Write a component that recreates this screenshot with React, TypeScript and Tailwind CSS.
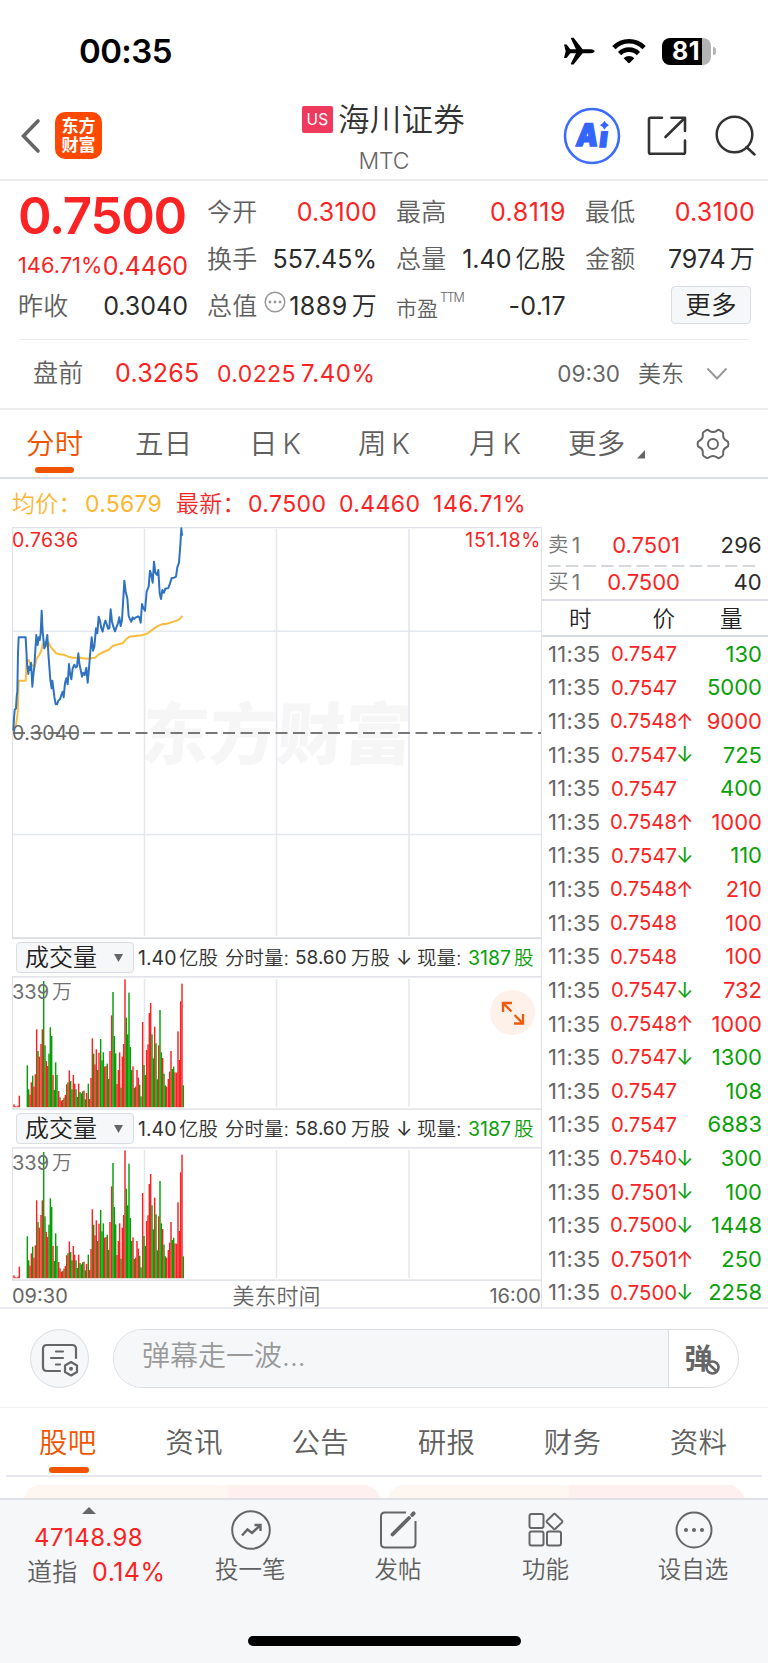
import React from "react";

const avgLine =
  "40,625 48,615 53,580 56,482 77,482 80,420 86,420 90,432 97,436 104,440 110,415 118,405 125,388 128,372 134,366 140,378 146,368 153,382 160,390 168,400 180,403 190,404 205,410 220,413 240,413 258,416 285,413 297,403 310,396 325,390 338,378 350,374 368,370 378,358 388,350 405,348 425,346 442,341 455,331 470,320 485,313 500,311 515,307 530,302 538,298 547,288";
const priceLine =
  "40,632 42,595 44,570 48,565 50,530 52,515 54,400 56,352 77,352 79,390 81,430 85,462 87,440 90,450 93,428 95,460 97,500 100,465 103,440 106,390 109,345 111,372 113,375 116,352 119,360 122,340 125,272 128,335 131,365 133,385 137,375 142,345 145,400 148,440 151,480 155,505 157,482 160,505 163,530 167,553 171,553 175,542 180,538 184,525 188,515 191,532 195,490 199,475 203,493 207,432 210,460 214,478 218,445 223,434 227,442 231,440 235,400 238,430 242,450 246,470 250,458 254,465 259,443 263,488 267,445 271,395 275,352 279,392 283,380 288,325 292,340 296,290 300,303 304,325 308,335 312,315 316,302 320,312 324,326 328,325 332,268 336,305 340,320 345,334 350,320 354,310 358,292 362,318 366,300 369,250 373,182 377,215 382,235 386,288 390,298 394,305 398,292 402,297 408,292 414,289 418,292 422,308 426,252 430,264 435,272 440,215 446,200 450,152 454,165 458,188 462,125 466,158 471,165 475,150 479,220 483,237 487,210 492,218 496,206 505,204 510,190 515,174 522,173 528,170 532,142 537,128 541,75 544,25 546,45 548,42";

const bars =
  "42:523r 46:529r 50:530r 54:527r 58:497r 82:406g 86:478g 90:494r 94:457r 98:437g 102:470r 106:433r 110:298r 114:363g 118:380r 123:342r 127:298r 131:153g 135:346g 139:393r 143:408r 147:371g 151:292g 155:318g 159:435r 163:480g 167:397g 171:435g 176:483r 180:502r 184:512r 188:510r 192:503g 196:495r 200:463r 204:457g 208:421r 212:453g 216:478g 220:435r 224:461r 228:478g 232:501g 236:461r 240:486g 244:490g 248:484g 252:482r 256:508g 260:489r 265:461g 269:507r 273:444r 277:325r 281:371g 285:403r 289:358r 293:420g 297:368r 302:327g 306:391g 310:367g 314:410r 318:408r 322:401g 326:447g 330:363r 335:256r 339:186g 343:318g 347:370g 351:462r 355:420r 359:367r 363:473g 367:380r 371:342r 375:148r 379:263g 383:313g 387:188g 391:351g 395:420g 399:409r 403:474g 407:470r 411:420r 415:443r 419:464g 423:499g 428:276r 432:405g 436:435g 440:360r 444:343r 448:249r 452:219r 456:313g 460:385g 464:290r 468:340g 472:448g 476:346r 480:240g 484:367g 488:384r 492:431g 496:466g 500:470r 505:447r 509:425r 513:363r 517:417g 521:410g 525:427r 530:428r 534:304r 538:390r 542:214r 546:161r 550:466g"
    .split(" ")
    .map((s) => {
      const [x, rest] = s.split(":");
      return { x: Number(x), top: parseInt(rest, 10), up: rest.endsWith("r") };
    });

const trades: [string, string, string, boolean][] = [
  ["0.7547", "", "130", false],
  ["0.7547", "", "5000", false],
  ["0.7548", "↑", "9000", true],
  ["0.7547", "↓", "725", false],
  ["0.7547", "", "400", false],
  ["0.7548", "↑", "1000", true],
  ["0.7547", "↓", "110", false],
  ["0.7548", "↑", "210", true],
  ["0.7548", "", "100", true],
  ["0.7548", "", "100", true],
  ["0.7547", "↓", "732", true],
  ["0.7548", "↑", "1000", true],
  ["0.7547", "↓", "1300", false],
  ["0.7547", "", "108", false],
  ["0.7547", "", "6883", false],
  ["0.7540", "↓", "300", false],
  ["0.7501", "↓", "100", false],
  ["0.7500", "↓", "1448", false],
  ["0.7501", "↑", "250", false],
  ["0.7500", "↓", "2258", false],
];

const RED = "text-[#fb2323]";
const GREEN = "text-[#09a009]";

function StatusBar() {
  return (
    <div className="flex h-[92px] items-start pr-[52px] pl-[79px]">
      <div className="mt-[31px] text-[33px] leading-[40px] font-semibold tracking-[-0.6px] text-black">00:35</div>
      <div className="mt-[37px] ml-auto flex items-center">
        <svg width="31" height="28" viewBox="0 0 31 28" className="mr-[17px]">
          <path
            d="M0 7.5H2.6L6.3 12.2H12L6.9 1.6Q6.6.8 7.5.8H9.6L18.6 12.2H26.5Q30.6 12.6 30.6 14.2Q30.6 15.9 26.5 16.3H18.6L9.6 27.4H7.5Q6.6 27.4 6.9 26.6L12 16.3H6.3L2.6 21H0L1.7 14.2Z"
            fill="#000"
          />
        </svg>
        <svg width="34" height="26" viewBox="0 0 34 26" className="mr-[16px]">
          <g fill="none" stroke="#000" strokeWidth="4.6">
            <path d="M1.9 9.6A21 21 0 0 1 32.1 9.6" />
            <path d="M7.6 15.6A13.2 13.2 0 0 1 26.4 15.6" />
          </g>
          <path d="M11.6 20.2A8 8 0 0 1 22.4 20.2L17.9 24.8Q17 25.6 16.1 24.8Z" fill="#000" />
        </svg>
        <div className="flex h-[27px] w-[49px] items-center rounded-[8px] bg-[linear-gradient(90deg,#000_81%,#b3b3b3_81%)]">
          <span className="ml-[10px] text-[25px] leading-[31px] font-bold tracking-[0.4px] text-white">81</span>
        </div>
        <div className="ml-[2px] h-[8px] w-[3px] rounded-r-full bg-[#b3b3b3]" />
      </div>
    </div>
  );
}

function Header() {
  return (
    <div className="flex h-[89px] items-start border-b-2 border-[#ebebeb] pl-[20px]">
      <svg width="22" height="38" viewBox="0 0 22 38" className="mt-[25px]">
        <path d="M18 4L3.5 19L18 34" fill="none" stroke="#666" strokeWidth="3.6" strokeLinecap="round" />
      </svg>
      <div className="mt-[20px] ml-[13px] flex h-[47px] w-[47px] flex-col items-center justify-center rounded-[10px] bg-[#ff4800] text-[17px] leading-[19px] font-bold tracking-[0px] text-white">
        <span>东方</span>
        <span>财富</span>
      </div>
      <div className="ml-[200px] w-[166px]">
        <div className="mt-[6px] flex h-[42px] items-center">
          <span className="flex h-[27px] w-[31px] items-center justify-center rounded-[2px] bg-[#f03a5d] pt-px text-[15.5px] text-white">
            US
          </span>
          <span className="mt-[2px] ml-[5px] text-[31.5px] leading-[42px] font-[350] whitespace-nowrap text-[#333]">海川证券</span>
        </div>
        <div className="mt-[7px] w-[164px] text-center text-[23px] leading-[28px] font-[350] tracking-[-0.2px] text-[#666]">
          MTC
        </div>
      </div>
      <svg width="58" height="58" viewBox="0 0 58 58" className="mt-[15px] ml-[95px]">
        <circle cx="29" cy="29" r="27" fill="none" stroke="#3b6cff" strokeWidth="2.6" />
        <g fill="#3466ff" stroke="#3466ff" strokeWidth="1.6" fontFamily="Inter, sans-serif" fontWeight="900">
          <text transform="translate(12.2 39) skewX(-7)" fontSize="31" textLength="22" lengthAdjust="spacingAndGlyphs">
            A
          </text>
          <text transform="translate(35.6 39.8) skewX(-7)" fontSize="28">
            ı
          </text>
        </g>
        <path d="M41.5 13.8Q42.8 16.9 46 18.2Q42.8 19.5 41.5 22.7Q40.1 19.5 37 18.2Q40.1 16.9 41.5 13.8Z" fill="#3466ff" />
      </svg>
      <svg width="42" height="42" viewBox="0 0 42 42" className="mt-[22px] ml-[25px]">
        <g fill="none" stroke="#333" strokeWidth="2.6" strokeLinecap="round" strokeLinejoin="round">
          <path d="M16 3.8H4.5Q3 3.8 3 5.3V38.2Q3 39.7 4.5 39.7H37.5Q39 39.7 39 38.2V26.5M25.5 3.8H39V17M39 3.8L19.5 23" />
        </g>
      </svg>
      <svg width="42" height="42" viewBox="0 0 42 42" className="mt-[22px] ml-[27px]">
        <g fill="none" stroke="#333" strokeWidth="2.5" strokeLinecap="round">
          <circle cx="19.5" cy="20.5" r="17.8" />
          <path d="M31.5 33L39.5 40.5" />
        </g>
      </svg>
    </div>
  );
}

function Pair({ label, value, red }: { label: string; value: string; red?: boolean }) {
  return (
    <div className="flex h-[47px] items-center justify-between text-[25px] whitespace-nowrap">
      <span className="-ml-px font-[350] text-[#606060]">{label}</span>
      <span className={red ? "text-[#fb2323]" : "tracking-[0px] text-[#2b2b2b]"}>{value}</span>
    </div>
  );
}

function Quote() {
  return (
    <div className="h-[158px] pt-[8px] pr-[13px] pl-[18px]">
      <div className="grid grid-cols-[170px_169px_169px_169px] gap-x-[20px]">
        <div>
          <div className={`h-[53px] text-[51px] leading-[53px] font-semibold tracking-[-1.3px] ${RED}`}>0.7500</div>
          <div className={`flex h-[41px] items-center justify-between pt-[5px] ${RED}`}>
            <span className="text-[21.8px] tracking-[0px]">146.71%</span>
            <span className="pt-[4px] text-[25px] tracking-[-0.1px]">0.4460</span>
          </div>
          <div className="flex h-[47px] items-center justify-between text-[25px] whitespace-nowrap">
            <span className="font-[350] text-[#606060]">昨收</span>
            <span className="tracking-[0px] text-[#2b2b2b]">0.3040</span>
          </div>
        </div>
        <div>
          <Pair label="今开" value="0.3100" red />
          <Pair label="换手" value="557.45%" />
          <div className="flex h-[47px] items-center text-[25px] whitespace-nowrap">
            <span className="-ml-px font-[350] text-[#606060]">总值</span>
            <svg width="22" height="22" viewBox="0 0 22 22" className="mb-[10px] ml-[6px]">
              <circle cx="11" cy="11" r="9.8" fill="none" stroke="#999" strokeWidth="1.5" />
              <g fill="#999">
                <circle cx="6" cy="11" r="1.4" />
                <circle cx="11" cy="11" r="1.4" />
                <circle cx="16" cy="11" r="1.4" />
              </g>
            </svg>
            <span className="ml-auto flex gap-[4px] text-[#2b2b2b]">
              <span className="tracking-[0.5px]">1889</span>
              <span className="font-[350]">万</span>
            </span>
          </div>
        </div>
        <div>
          <div className="flex h-[47px] items-center justify-between text-[25px] whitespace-nowrap">
            <span className="-ml-px font-[350] text-[#606060]">最高</span>
            <span className={`tracking-[0.5px] ${RED}`}>0.8119</span>
          </div>
          <div className="flex h-[47px] items-center justify-between text-[25px] whitespace-nowrap">
            <span className="-ml-px font-[350] text-[#606060]">总量</span>
            <span className="flex gap-[4px] text-[#2b2b2b]">
              <span className="tracking-[0px]">1.40</span>
              <span className="font-[350]">亿股</span>
            </span>
          </div>
          <div className="flex h-[47px] items-center text-[25px]">
            <span className="mt-[5px] -ml-px text-[21px] font-[350] tracking-[0px] text-[#606060]">市盈</span>
            <span className="mb-[17px] ml-[2px] text-[12.5px] font-light tracking-[-1.2px] text-[#666]">TTM</span>
            <span className="ml-auto tracking-[0.3px] text-[#2b2b2b]">-0.17</span>
          </div>
        </div>
        <div>
          <Pair label="最低" value="0.3100" red />
          <div className="flex h-[47px] items-center justify-between text-[25px] whitespace-nowrap">
            <span className="-ml-px font-[350] text-[#606060]">金额</span>
            <span className="flex gap-[4px] text-[#2b2b2b]">
              <span className="tracking-[0px]">7974</span>
              <span className="font-[350]">万</span>
            </span>
          </div>
          <div className="mt-[3px] ml-[85px] flex h-[38px] w-[80px] items-center justify-center rounded-[4px] border border-[#d9dce2] bg-[#f6f7f9] text-[25.5px] font-[350] text-[#222]">
            更多
          </div>
        </div>
      </div>
    </div>
  );
}

function PreMarket() {
  return (
    <div className="flex h-[70px] items-center border-b-2 border-[#ededed] whitespace-nowrap">
      <span className="ml-[33px] w-[82px] text-[25px] font-[350] text-[#606060]">盘前</span>
      <span className={`w-[102px] text-[25px] ${RED}`}>0.3265</span>
      <span className={`w-[84px] text-[23px] tracking-[0.4px] ${RED}`}>0.0225</span>
      <span className={`text-[24px] tracking-[0.6px] ${RED}`}>7.40%</span>
      <span className="ml-auto text-[22.5px] tracking-[0px] text-[#666]">09:30</span>
      <span className="ml-[18px] text-[23px] font-[350] tracking-[0px] text-[#606060]">美东</span>
      <svg width="22" height="14" viewBox="0 0 22 14" className="mr-[40px] ml-[22px]">
        <path d="M1.5 1.5L11 11.5L20.5 1.5" fill="none" stroke="#999" strokeWidth="2" />
      </svg>
    </div>
  );
}

function PeriodTabs() {
  return (
    <div className="flex h-[69px] border-b-2 border-[#dadde3] pl-[26px] text-[28.5px] leading-[68px] font-[350] text-[#606060] [word-spacing:-3.5px]">
      <div className="flex w-[109px] flex-col items-start text-[#f05400]">
        <span className="h-[57px]">分时</span>
        <span className="ml-[9px] h-[6px] w-[39px] rounded-full bg-[#f05400]" />
      </div>
      <span className="w-[114px]">五日</span>
      <span className="w-[109px]">日 K</span>
      <span className="w-[111px]">周 K</span>
      <span className="w-[99px]">月 K</span>
      <span className="w-[58px]">更多</span>
      <svg width="9" height="9" viewBox="0 0 9 9" className="mt-[40px] ml-[11px]">
        <path d="M8 0V8.5H0Z" fill="#666" />
      </svg>
      <svg width="34" height="32" viewBox="0 0 34 32" className="mt-[18px] ml-[50px]">
        <g fill="none" stroke="#666" strokeWidth="2" strokeLinejoin="round">
          <path d="M10.5 2.2Q11.8 1.4 13 2.6Q17 5.4 21 2.6Q22.2 1.4 23.5 2.2L26.4 4Q27.6 4.8 27.2 6.4Q26.6 11 31 13Q32.4 13.5 32.4 16Q32.4 18.5 31 19Q26.6 21 27.2 25.6Q27.6 27.2 26.4 28L23.5 29.8Q22.2 30.6 21 29.4Q17 26.6 13 29.4Q11.8 30.6 10.5 29.8L7.6 28Q6.4 27.2 6.8 25.6Q7.4 21 3 19Q1.6 18.5 1.6 16Q1.6 13.5 3 13Q7.4 11 6.8 6.4Q6.4 4.8 7.6 4Z" />
          <circle cx="17" cy="16" r="5" />
        </g>
      </svg>
    </div>
  );
}

function VolumeRow() {
  return (
    <div className="flex items-center pl-[4px] text-[19.5px] tracking-[0px] whitespace-nowrap text-[#333]">
      <div className="flex h-[31px] w-[118px] items-center rounded-[4px] border border-[#d9dce2] bg-[#f6f7f9] pl-[8px]">
        <span className="text-[24px] leading-[29px] font-[350] text-[#222]">成交量</span>
        <svg width="9" height="8" viewBox="0 0 9 8" className="ml-[17px]">
          <path d="M0 0H9L4.5 8Z" fill="#666" />
        </svg>
      </div>
      <div className="flex items-center pt-[2px]">
        <span className="ml-[4px] w-[38px]">1.40</span>
        <span className="ml-[3px] w-[46px] font-[350]">亿股</span>
        <span className="w-[70px] font-[350]">分时量:</span>
        <span className="w-[56px] text-[19px]">58.60</span>
        <span className="w-[45px] font-[350]">万股</span>
        <span className="w-[21px]">↓</span>
        <span className="w-[51px] font-[350]">现量:</span>
        <span className={GREEN}>3187</span>
        <span className={`ml-[3px] font-[350] ${GREEN}`}>股</span>
      </div>
    </div>
  );
}

function VolumeChart({ expand }: { expand?: boolean }) {
  return (
    <div className="relative h-[134px] w-[529px]">
      <svg width="529" height="134" viewBox="12 976 529 134" className="block">
        <path d="M12.5 977V1109" stroke="#dfe2e8" />
        <path d="M12 976.8H541M12 1109.2H541" stroke="#d9dce2" strokeWidth="1.2" />
        <path d="M144.5 979V1107M276.5 979V1107M409 979V1107" stroke="#e3e7ee" strokeWidth="1.5" />
        {bars.map((b) => (
          <rect
            key={b.x}
            x={b.x / 3 - 0.72}
            y={930 + b.top / 3}
            width="1.44"
            height={(531 - b.top) / 3 + 0.2}
            fill={b.up ? "#f92222" : "#06a006"}
          />
        ))}
      </svg>
      <div className="absolute top-[4px] left-0 flex gap-[3px] text-[20px] leading-[24px] tracking-[0px] text-[#707070]">
        <span>339</span>
        <span className="font-[350]">万</span>
      </div>
      {expand && (
        <div className="absolute top-[14px] left-[478px] flex h-[45px] w-[45px] items-center justify-center rounded-full bg-[#fdf1ea]">
          <svg width="24" height="24" viewBox="0 0 24 24">
            <path
              d="M2 11V2H11M2 2L10.5 10.5M22 13V22.5H13M22 22.5L13.5 14"
              fill="none"
              stroke="#f05a0a"
              strokeWidth="2.3"
            />
          </svg>
        </div>
      )}
    </div>
  );
}

function Charts() {
  return (
    <div className="w-[529px] shrink-0">
      <div className="relative h-[412px]">
        <svg width="529" height="412" viewBox="12 527 529 412" className="block">
          <text
            transform="translate(140 759) skewX(-4)"
            fontSize="67.5"
            fontWeight="900"
            fill="#f6f6f6"
            fontFamily="'Noto Sans CJK SC', sans-serif"
          >
            东方财富
          </text>
          <path d="M12.5 527V938M12 527.6H541" stroke="#dfe2e8" strokeWidth="1.2" />
          <path d="M144.5 529V936M276.5 529V936M409 529V936M13 631.2H541M13 834.5H541" stroke="#e3e7ee" strokeWidth="1.6" />
          <path d="M12 938.2H541" stroke="#dadde3" strokeWidth="2" />
          <path d="M13 733H541" stroke="#777" strokeWidth="2.2" strokeDasharray="12 5.5" />
          <g transform="translate(0 520) scale(.33333)" fill="none" strokeLinejoin="round">
            <polyline points={avgLine} stroke="#fdbb3c" strokeWidth="6" />
            <polyline points={priceLine} stroke="#2f73c0" strokeWidth="6" />
          </g>
        </svg>
        <span className={`absolute top-[1px] left-0 text-[19.5px] leading-[24px] tracking-[0.4px] ${RED}`}>0.7636</span>
        <span className={`absolute top-[1px] right-0 text-[19.5px] leading-[24px] tracking-[0.7px] ${RED}`}>151.18%</span>
        <span className="absolute top-[194px] left-0 text-[19.5px] leading-[24px] tracking-[0.4px] text-[#666]">0.3040</span>
      </div>
      <div className="flex h-[37px] items-center">
        <VolumeRow />
      </div>
      <VolumeChart expand />
      <div className="flex h-[37px] items-center">
        <VolumeRow />
      </div>
      <VolumeChart />
      <div className="grid h-[25px] grid-cols-3 items-center text-[20px] tracking-[0px] text-[#666]">
        <span>09:30</span>
        <span className="text-center text-[22px] leading-[25px] font-[350]">美东时间</span>
        <span className="text-right">16:00</span>
      </div>
    </div>
  );
}

function OrderRow({ side, price, qty }: { side: string; price: string; qty: string }) {
  return (
    <div className="flex h-[37px] items-center">
      <span className="flex w-[50px] items-center gap-[3px] text-[#777]">
        <span className="text-[20.5px] font-[350]">{side}</span>
        <span className="text-[21px]">1</span>
      </span>
      <span className={`w-[82px] text-right text-[22px] tracking-[0px] ${RED}`}>{price}</span>
      <span className="ml-auto text-[22px] text-[#2b2b2b]">{qty}</span>
    </div>
  );
}

function Tape() {
  return (
    <div className="flex-1 border-l border-[#dfe2e8]">
      <div className="h-[74px] border-b-2 border-[#dadde3] pr-[6px] pl-[6px] whitespace-nowrap">
        <OrderRow side="卖" price="0.7501" qty="296" />
        <svg width="208" height="2" viewBox="0 0 208 2" className="mt-[1px] block">
          <path d="M0 1H208" stroke="#d5d8df" strokeWidth="2" strokeDasharray="12.5 5.2" />
        </svg>
        <div className="-mt-[3px]">
          <OrderRow side="买" price="0.7500" qty="40" />
        </div>
      </div>
      <div className="flex h-[36px] items-center border-b-2 border-[#dadde3] pt-[2px] text-[22.5px] font-[350] tracking-[0px] text-[#222]">
        <span className="ml-[27px]">时</span>
        <span className="ml-[61px]">价</span>
        <span className="ml-[45px]">量</span>
      </div>
      <div className="pr-[6px] pl-[6px]">
        {trades.map(([price, arrow, qty, up], i) => (
          <div key={i} className="flex h-[33.62px] items-center pt-px text-[22px] whitespace-nowrap">
            <span className="w-[56px] text-[#666]">11:35</span>
            <span
              className={
                price === "0.7501"
                  ? "w-[73px] text-right text-[21.5px] tracking-[0px] text-[#fb2323]"
                  : "w-[73px] text-right text-[20.3px] tracking-[0px] text-[#fb2323]"
              }
            >
              {price}
            </span>
            <span
              className={
                arrow === "↑" ? "-ml-px w-[15px] text-[21px] text-[#fb2323]" : "-ml-px w-[15px] text-[21px] text-[#09a009]"
              }
            >
              {arrow}
            </span>
            <span className={up ? "ml-auto tracking-[0px] text-[#fb2323]" : "ml-auto tracking-[0px] text-[#09a009]"}>{qty}</span>
          </div>
        ))}
      </div>
    </div>
  );
}

function Danmu() {
  return (
    <div className="flex h-[99px] items-start border-b border-[#efefef] pt-[20px] pl-[30px]">
      <div className="flex h-[59px] w-[59px] items-center justify-center rounded-full border border-[#d9dce2] bg-[#f6f7f9]">
        <svg width="38" height="34" viewBox="0 0 38 34" className="mt-[2px] ml-[1px]">
          <g fill="none" stroke="#666" strokeWidth="2.2" strokeLinecap="round">
            <path d="M19 28H6Q2 28 2 24V6Q2 2 6 2H31Q35 2 35 6V15" />
            <path d="M15 8.5H22M10 15H22M15 21.5H19" />
            <path d="M30 19L36 22.5V29L30 32.5L24 29V22.5Z" strokeLinejoin="round" />
          </g>
          <circle cx="30" cy="25.8" r="2" fill="#666" />
        </svg>
      </div>
      <div className="ml-[23.5px] flex h-[59px] w-[626px] overflow-hidden rounded-full border border-[#d9dce2]">
        <div className="w-[555px] border-r border-[#d9dce2] bg-[#f6f7f9] pl-[28.5px] text-[28px] leading-[53px] font-[350] tracking-[0px] text-[#999]">
          弹幕走一波...
        </div>
        <div className="flex flex-1 items-center pl-[16px]">
          <span className="text-[28px] font-bold text-[#666]">弹</span>
          <svg width="15" height="15" viewBox="0 0 15 15" className="mt-[18px] -ml-[8px] shrink-0">
            <circle cx="7.5" cy="7.5" r="6" fill="#fff" stroke="#666" strokeWidth="2.6" />
            <path d="M3.8 4L11.2 11" stroke="#666" strokeWidth="2.6" />
          </svg>
        </div>
      </div>
    </div>
  );
}

function SectionTabs() {
  return (
    <div className="mx-[6px] h-[69px] border-b-2 border-[#e6e8ed]">
      <div className="flex h-full pl-[33px] text-[28.5px] leading-[70px] font-[350] text-[#606060]">
        <div className="flex w-[126.3px] flex-col items-start text-[#f05400]">
          <span className="h-[59px]">股吧</span>
          <span className="ml-[10px] h-[6px] w-[40px] rounded-full bg-[#f05400]" />
        </div>
        <span className="w-[126.2px]">资讯</span>
        <span className="w-[126.2px]">公告</span>
        <span className="w-[126px]">研报</span>
        <span className="w-[126px]">财务</span>
        <span>资料</span>
      </div>
    </div>
  );
}

function Action({ label, children }: { label: string; children: React.ReactNode }) {
  return (
    <div className="flex w-[147.6px] flex-col items-center">
      <svg width="42" height="42" viewBox="0 0 42 42" className="mt-[9px]" fill="none" stroke="#666" strokeWidth="2">
        {children}
      </svg>
      <span className="mt-[3px] -ml-px text-[23.5px] leading-[32px] font-[350] tracking-[0px] text-[#606060]">{label}</span>
    </div>
  );
}

function BottomBar() {
  return (
    <div className="flex h-[165px] flex-col border-t-2 border-[#dfe1e6] bg-[#f6f7f9]">
      <div className="flex h-[136px]">
        <div className="w-[177px]">
          <svg width="14" height="7" viewBox="0 0 14 7" className="mt-[7px] ml-[82px] block">
            <path d="M7 0L14 7H0Z" fill="#666" />
          </svg>
          <div className={`mt-[8px] ml-[34px] text-[24px] leading-[32px] tracking-[0.5px] ${RED}`}>47148.98</div>
          <div className="mt-[1px] ml-[27px] flex items-center text-[25px] leading-[34px]">
            <span className="w-[65px] font-[350] text-[#606060]">道指</span>
            <span className={`tracking-[0.5px] ${RED}`}>0.14%</span>
          </div>
        </div>
        <Action label="投一笔">
          <circle cx="21" cy="21" r="18.8" />
          <path d="M12 26.5L17.5 20.5L22 24L30 16.5M24.5 16H30.5V22" strokeWidth="2.4" />
        </Action>
        <Action label="发帖">
          <path d="M29 3.5H8Q4 3.5 4 7.5V34.5Q4 38.5 8 38.5H34.5Q38.5 38.5 38.5 34.5V12" />
          <path d="M15.5 25.5L32 9" strokeWidth="3.8" strokeLinecap="round" />
          <path d="M35.2 5.8L36.6 4.4" strokeWidth="4" strokeLinecap="round" />
        </Action>
        <Action label="功能">
          <rect x="4.5" y="5" width="14" height="14" rx="2" />
          <rect x="4.5" y="22.5" width="14" height="14" rx="2" />
          <rect x="22" y="22.5" width="14" height="14" rx="2" />
          <path d="M28.6 5.2Q29.5 4.4 30.4 5.2L37 11.6Q37.8 12.5 37 13.4L30.4 19.8Q29.5 20.6 28.6 19.8L22 13.4Q21.2 12.5 22 11.6Z" />
        </Action>
        <Action label="设自选">
          <circle cx="21" cy="21" r="17.5" />
          <g fill="#666" stroke="none">
            <circle cx="13" cy="21" r="2" />
            <circle cx="21" cy="21" r="2" />
            <circle cx="29" cy="21" r="2" />
          </g>
        </Action>
      </div>
      <div className="ml-[248px] h-[10px] w-[273px] rounded-full bg-black" />
    </div>
  );
}

export default function App() {
  return (
    <div className="h-[1663px] w-[768px] overflow-hidden bg-white font-[Inter,'Noto_Sans_CJK_SC',sans-serif] tracking-[0.25px]">
      <StatusBar />
      <Header />
      <Quote />
      <div className="mx-[20px] h-px bg-[#ebebeb]" />
      <PreMarket />
      <PeriodTabs />
      <div className="flex h-[48px] items-center pt-[2px] pl-[12px] text-[23px] whitespace-nowrap">
        <span className="w-[73px] font-[350] text-[#fdb62f]">均价：</span>
        <span className="w-[91px] text-[#fdb62f]">0.5679</span>
        <span className={`w-[72px] font-[350] ${RED}`}>最新：</span>
        <span className={`w-[91px] tracking-[0.4px] ${RED}`}>0.7500</span>
        <span className={`w-[94px] tracking-[0.4px] ${RED}`}>0.4460</span>
        <span className={`tracking-[0.6px] ${RED}`}>146.71%</span>
      </div>
      <div className="flex h-[782px] border-b-2 border-[#ebecef] pl-[12px]">
        <Charts />
        <Tape />
      </div>
      <Danmu />
      <SectionTabs />
      <div className="flex h-[21px] gap-[8px] overflow-hidden pt-[8px] pl-[24px]">
        <div className="flex h-[40px] w-[356px] overflow-hidden rounded-[16px] bg-[#fef6f1]">
          <div className="ml-auto w-[153px] bg-[#fef0ee]" />
        </div>
        <div className="flex h-[40px] w-[356px] overflow-hidden rounded-[16px] bg-[#fef6f1]">
          <div className="ml-auto w-[175px] bg-[#fef0ee]" />
        </div>
      </div>
      <BottomBar />
    </div>
  );
}
